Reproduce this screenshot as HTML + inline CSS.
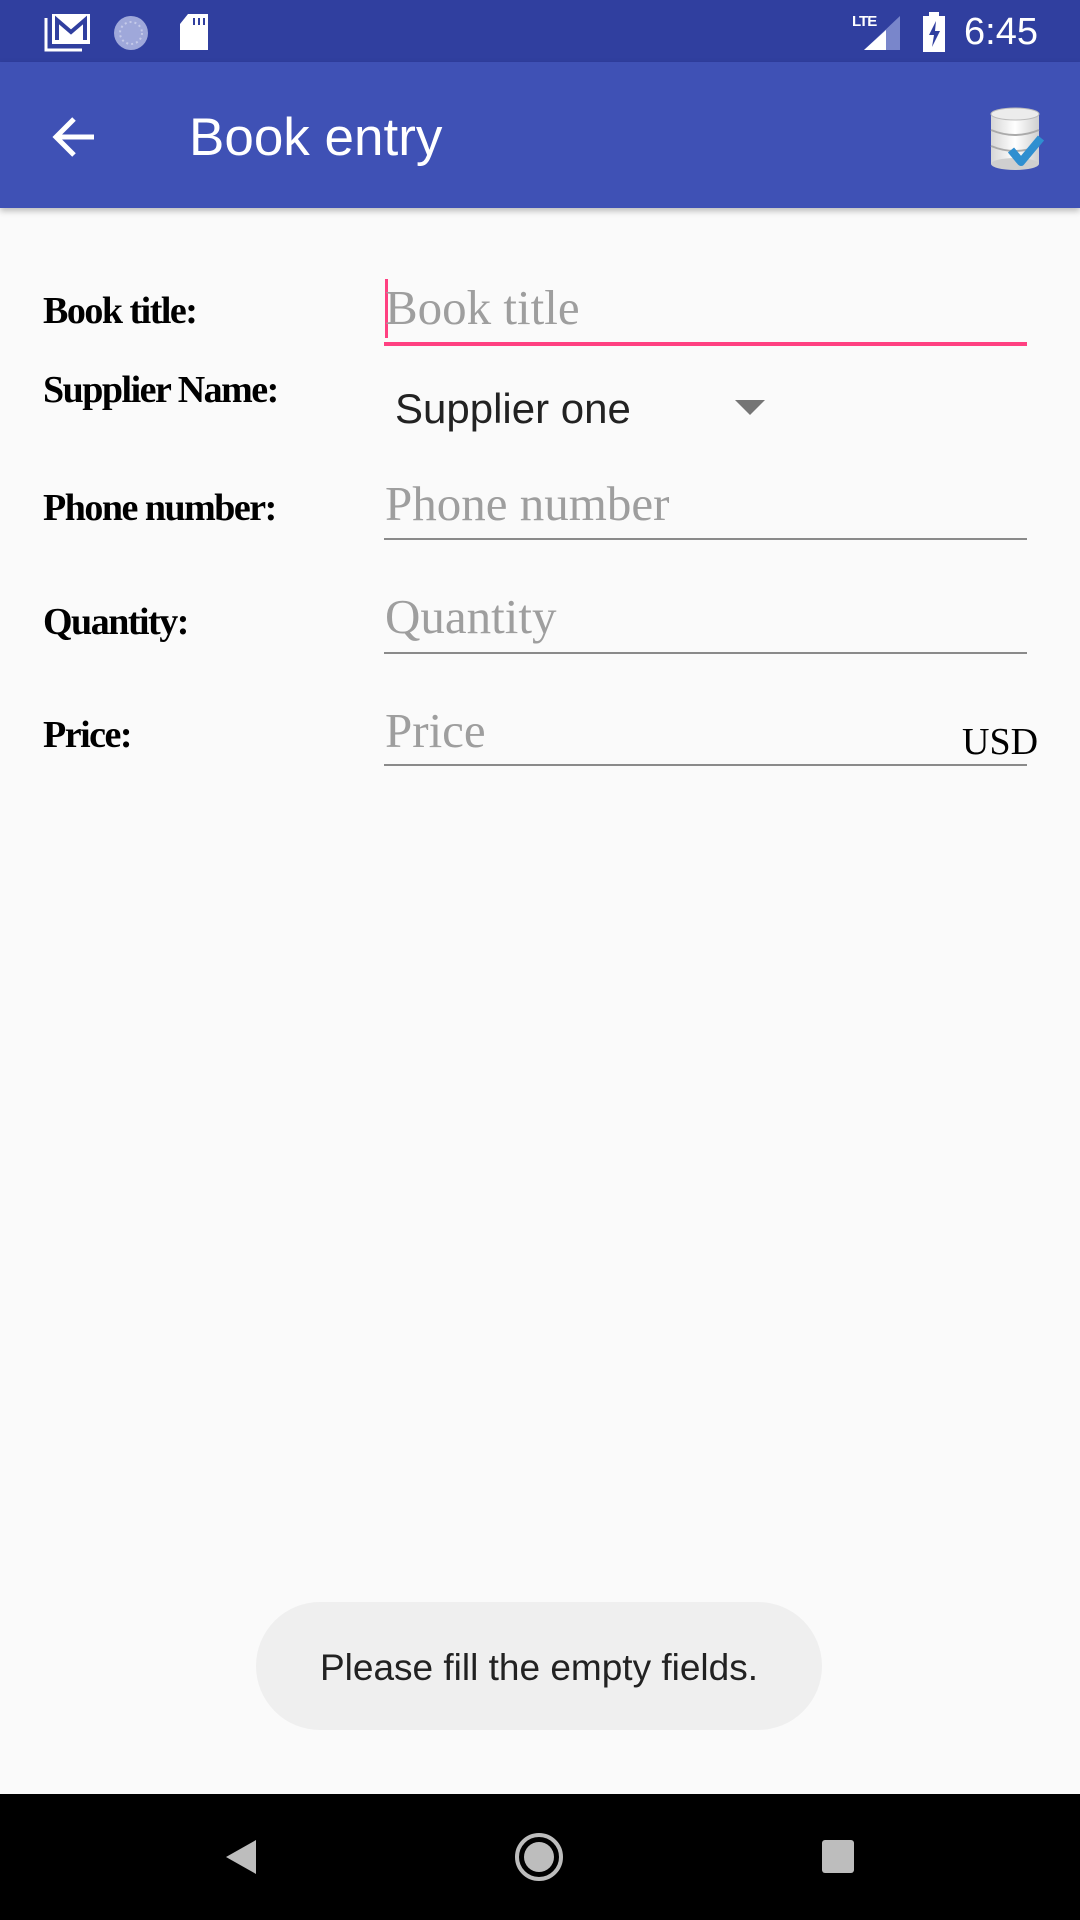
<!DOCTYPE html>
<html><head><meta charset="utf-8"><style>
*{margin:0;padding:0;box-sizing:border-box}
body{width:1080px;height:1920px;background:#FAFAFA;position:relative;overflow:hidden;font-family:"Liberation Sans",sans-serif}
.abs{position:absolute}
.status{left:0;top:0;width:1080px;height:62px;background:#303F9F}
.appbar{left:0;top:62px;width:1080px;height:146px;background:#3F51B5;box-shadow:0 3px 6px rgba(0,0,0,.25)}
.lbl{position:absolute;left:43px;font-family:"Liberation Serif",serif;font-weight:bold;font-size:38px;color:#000;letter-spacing:-1.5px;line-height:1}
.ph{position:absolute;left:385px;font-family:"Liberation Serif",serif;font-size:49px;color:#9E9E9E;line-height:1}
.ul{position:absolute;left:384px;width:643px;height:2px;background:#8A8A8A}
</style></head><body>
<div class="abs status"></div>
<svg class="abs" style="left:44px;top:12px" width="48" height="40" viewBox="0 0 48 40">
<path d="M2 6v32h36" stroke="#fff" stroke-width="3" fill="none"/>
<rect x="8" y="2" width="38" height="30" fill="#fff"/>
<path d="M13 28V8l14 12 14-12v20" stroke="#303F9F" stroke-width="4" fill="none"/>
</svg>
<svg class="abs" style="left:111px;top:13px" width="40" height="40"><circle cx="20" cy="20" r="17" fill="#9FA8DA"/><circle cx="20" cy="20" r="11" fill="none" stroke="#C5CAE9" stroke-width="2" stroke-dasharray="2 3"/></svg>
<svg class="abs" style="left:178px;top:12px" width="34" height="40"><path d="M10 2h20v36H2V12z" fill="#fff"/><rect x="15" y="6" width="2" height="7" fill="#303F9F"/><rect x="20" y="6" width="2" height="7" fill="#303F9F"/><rect x="25" y="6" width="2" height="7" fill="#303F9F"/></svg>
<div class="abs" style="left:852px;top:13px;color:#fff;font-size:15px;font-weight:bold;letter-spacing:-1px">LTE</div>
<svg class="abs" style="left:862px;top:14px" width="40" height="38"><path d="M38 2V36H2z" fill="#7986CB"/><path d="M24 16V36H2L24 16z" fill="#fff"/></svg>
<svg class="abs" style="left:922px;top:12px" width="24" height="40"><rect x="7" y="0" width="10" height="5" fill="#fff"/><rect x="1" y="4" width="22" height="36" fill="#fff"/><path d="M14 9l-7 14h5l-2 12 8-16h-5z" fill="#303F9F"/></svg>
<div class="abs" style="left:964px;top:10px;color:#fff;font-size:38px;line-height:44px">6:45</div>

<div class="abs appbar"></div>
<svg class="abs" style="left:50px;top:115px" width="48" height="44" viewBox="0 0 48 44"><path d="M44 22H6M24 4L6 22l18 18" stroke="#fff" stroke-width="5" fill="none"/></svg>
<div class="abs" style="left:189px;top:106px;color:#fff;font-size:53px;font-weight:500;line-height:64px">Book entry</div>
<svg class="abs" style="left:985px;top:106px" width="62" height="66" viewBox="0 0 62 66">
<defs><linearGradient id="g" x1="0" x2="1"><stop offset="0" stop-color="#d6d6d6"/><stop offset=".5" stop-color="#fff"/><stop offset="1" stop-color="#cfcfcf"/></linearGradient></defs>
<rect x="6" y="8" width="48" height="50" fill="url(#g)"/>
<ellipse cx="30" cy="58" rx="24" ry="6" fill="#cfcfcf"/>
<ellipse cx="30" cy="8" rx="24" ry="6" fill="#ececec" stroke="#bbb"/>
<path d="M6 24q24 10 48 0M6 40q24 10 48 0" stroke="#aaa" fill="none" stroke-width="2"/>
<path d="M26 44l10 12 20-24" stroke="#2f8fd0" stroke-width="8" fill="none" stroke-linejoin="round"/>
</svg>

<div class="lbl" style="top:292px">Book title:</div>
<div class="abs" style="left:385px;top:279px;width:3px;height:59px;background:#FF4081"></div>
<div class="ph" style="top:283px">Book title</div>
<div class="abs" style="left:384px;top:342px;width:643px;height:4px;background:#FF4081"></div>

<div class="lbl" style="top:371px">Supplier Name:</div>
<div class="abs" style="left:395px;top:385px;font-size:42px;color:#222;line-height:48px">Supplier one</div>
<svg class="abs" style="left:735px;top:400px" width="30" height="16"><path d="M0 0h30L15 15z" fill="#757575"/></svg>

<div class="lbl" style="top:489px">Phone number:</div>
<div class="ph" style="top:479px">Phone number</div>
<div class="ul" style="top:538px"></div>

<div class="lbl" style="top:603px">Quantity:</div>
<div class="ph" style="top:592px">Quantity</div>
<div class="ul" style="top:652px"></div>

<div class="lbl" style="top:716px">Price:</div>
<div class="ph" style="top:706px">Price</div>
<div class="abs" style="left:962px;top:723px;font-family:'Liberation Serif',serif;font-size:38px;color:#000;line-height:1">USD</div>
<div class="ul" style="top:764px"></div>

<div class="abs" style="left:256px;top:1602px;width:566px;height:128px;border-radius:64px;background:#EFEFEF;color:#222;font-size:37px;text-align:center;line-height:132px">Please fill the empty fields.</div>

<div class="abs" style="left:0;top:1794px;width:1080px;height:126px;background:#000"></div>
<svg class="abs" style="left:222px;top:1838px" width="38" height="38"><path d="M34 2V36L4 19z" fill="#bdbdbd"/></svg>
<svg class="abs" style="left:512px;top:1830px" width="54" height="54"><circle cx="27" cy="27" r="22" fill="none" stroke="#bdbdbd" stroke-width="4"/><circle cx="27" cy="27" r="15" fill="#bdbdbd"/></svg>
<div class="abs" style="left:822px;top:1840px;width:32px;height:33px;background:#bdbdbd;border-radius:3px"></div>
</body></html>
